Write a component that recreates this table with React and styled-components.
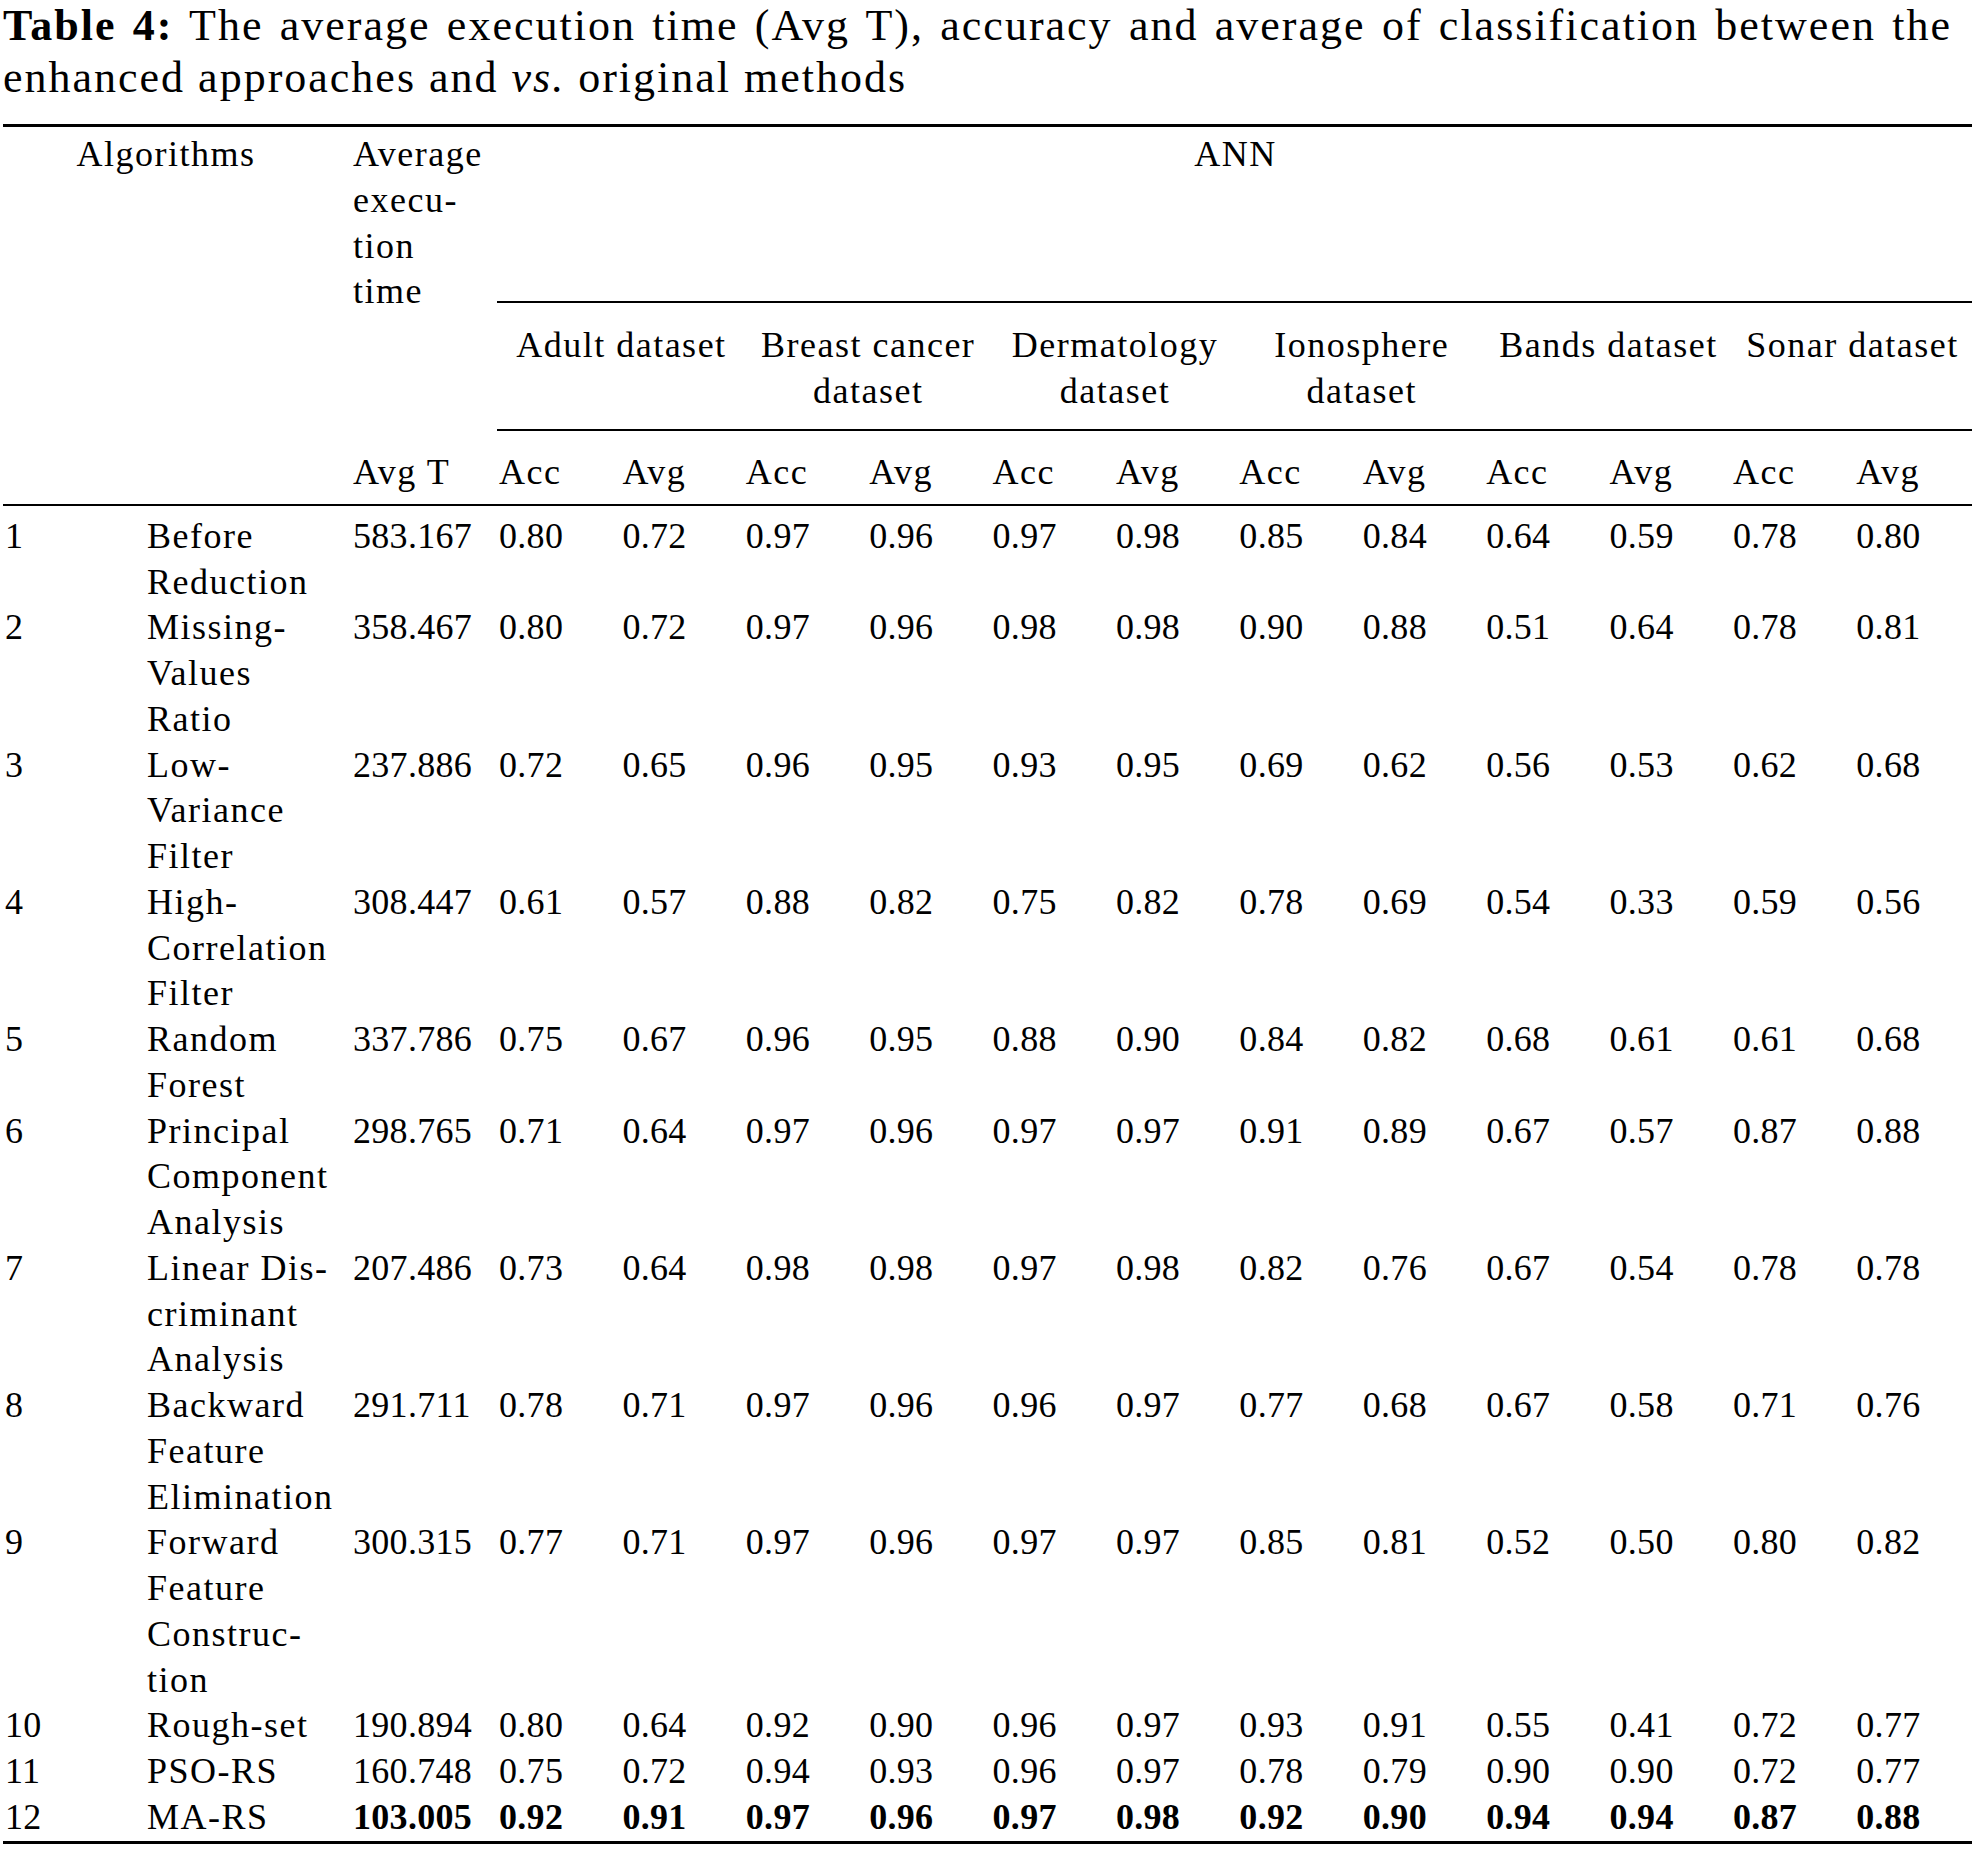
import React from "react";
import styled, { createGlobalStyle } from "styled-components";

const GlobalStyle = createGlobalStyle`
  html, body { margin: 0; padding: 0; background: #ffffff; }
  body {
    font-family: "Liberation Serif", "Times New Roman", Times, serif;
    color: #000000;
  }
`;

const COLS = "142px 206px 146px repeat(11, 123.4px) 1fr";

const Page = styled.div`
  width: 1969px;
  padding: 0 3px;
  font-family: "Liberation Serif", "Times New Roman", Times, serif;
  color: #000;
`;

const Caption = styled.p`
  margin: 0 0 20px 0;
  padding-right: 20px;
  font-size: 44px;
  line-height: 52px;
  letter-spacing: 2px;
  text-align: justify;
`;

const CaptionLabel = styled.b`
  font-weight: 700;
`;

const Em = styled.i`
  font-style: italic;
`;

const Head = styled.div`
  display: grid;
  grid-template-columns: ${COLS};
  border-top: 3px solid #000;
  border-bottom: 2px solid #000;
  font-size: 36px;
  line-height: 45.75px;
`;

const HeadCell = styled.div`
  box-sizing: border-box;
  grid-column: ${(p) => p.$col};
  grid-row: ${(p) => p.$row};
  padding: ${(p) => p.$pt || 5}px ${(p) => p.$pr || 0}px ${(p) => p.$pb || 0}px 2px;
  height: ${(p) => (p.$h ? `${p.$h}px` : "auto")};
  text-align: ${(p) => p.$align || "left"};
  letter-spacing: 1.5px;
  white-space: nowrap;
  border-bottom: ${(p) => (p.$rule ? "2px solid #000" : "none")};
`;

const Line = styled.span`
  display: block;
`;

const Body = styled.div`
  display: grid;
  grid-template-columns: ${COLS};
  padding-top: 8px;
  border-bottom: 3px solid #000;
  font-size: 36px;
  line-height: 45.75px;
`;

const Cell = styled.div`
  padding-left: 2px;
  white-space: nowrap;
  letter-spacing: ${(p) => (p.$word ? "1.5px" : "0.3px")};
  font-weight: ${(p) => (p.$bold ? 700 : 400)};
`;

const datasets = [
  ["Adult dataset"],
  ["Breast cancer", "dataset"],
  ["Dermatology", "dataset"],
  ["Ionosphere", "dataset"],
  ["Bands dataset"],
  ["Sonar dataset"],
];

const rows = [
  { id: "1", name: ["Before", "Reduction"], t: "583.167", v: ["0.80", "0.72", "0.97", "0.96", "0.97", "0.98", "0.85", "0.84", "0.64", "0.59", "0.78", "0.80"] },
  { id: "2", name: ["Missing-", "Values", "Ratio"], t: "358.467", v: ["0.80", "0.72", "0.97", "0.96", "0.98", "0.98", "0.90", "0.88", "0.51", "0.64", "0.78", "0.81"] },
  { id: "3", name: ["Low-", "Variance", "Filter"], t: "237.886", v: ["0.72", "0.65", "0.96", "0.95", "0.93", "0.95", "0.69", "0.62", "0.56", "0.53", "0.62", "0.68"] },
  { id: "4", name: ["High-", "Correlation", "Filter"], t: "308.447", v: ["0.61", "0.57", "0.88", "0.82", "0.75", "0.82", "0.78", "0.69", "0.54", "0.33", "0.59", "0.56"] },
  { id: "5", name: ["Random", "Forest"], t: "337.786", v: ["0.75", "0.67", "0.96", "0.95", "0.88", "0.90", "0.84", "0.82", "0.68", "0.61", "0.61", "0.68"] },
  { id: "6", name: ["Principal", "Component", "Analysis"], t: "298.765", v: ["0.71", "0.64", "0.97", "0.96", "0.97", "0.97", "0.91", "0.89", "0.67", "0.57", "0.87", "0.88"] },
  { id: "7", name: ["Linear Dis-", "criminant", "Analysis"], t: "207.486", v: ["0.73", "0.64", "0.98", "0.98", "0.97", "0.98", "0.82", "0.76", "0.67", "0.54", "0.78", "0.78"] },
  { id: "8", name: ["Backward", "Feature", "Elimination"], t: "291.711", v: ["0.78", "0.71", "0.97", "0.96", "0.96", "0.97", "0.77", "0.68", "0.67", "0.58", "0.71", "0.76"] },
  { id: "9", name: ["Forward", "Feature", "Construc-", "tion"], t: "300.315", v: ["0.77", "0.71", "0.97", "0.96", "0.97", "0.97", "0.85", "0.81", "0.52", "0.50", "0.80", "0.82"] },
  { id: "10", name: ["Rough-set"], t: "190.894", v: ["0.80", "0.64", "0.92", "0.90", "0.96", "0.97", "0.93", "0.91", "0.55", "0.41", "0.72", "0.77"] },
  { id: "11", name: ["PSO-RS"], t: "160.748", v: ["0.75", "0.72", "0.94", "0.93", "0.96", "0.97", "0.78", "0.79", "0.90", "0.90", "0.72", "0.77"] },
  { id: "12", name: ["MA-RS"], t: "103.005", v: ["0.92", "0.91", "0.97", "0.96", "0.97", "0.98", "0.92", "0.90", "0.94", "0.94", "0.87", "0.88"], bold: true },
];

function Lines({ items }) {
  return items.map((l, i) => <Line key={i}>{l}</Line>);
}

export default function App() {
  return (
    <Page>
      <GlobalStyle />
      <Caption>
        <CaptionLabel>Table 4:</CaptionLabel> The average execution time (Avg T), accuracy and average of
        classification between the enhanced approaches and <Em>vs.</Em> original methods
      </Caption>

      <Head>
        <HeadCell $col="1 / span 2" $row="1 / span 3" $align="center" $pr={24}>
          Algorithms
        </HeadCell>
        <HeadCell $col="3" $row="1 / span 2">
          <Lines items={["Average", "execu-", "tion", "time"]} />
        </HeadCell>
        <HeadCell $col="4 / span 12" $row="1" $align="center" $h={176} $rule>
          ANN
        </HeadCell>
        {datasets.map((d, i) => (
          <HeadCell
            key={i}
            $col={`${4 + i * 2} / span 2`}
            $row="2"
            $align="center"
            $h={128}
            $pt={20}
            $rule
          >
            <Lines items={d} />
          </HeadCell>
        ))}
        <HeadCell $col="3" $row="3" $pt={19} $pb={8}>
          Avg T
        </HeadCell>
        {datasets.flatMap((_, i) => [
          <HeadCell key={`a${i}`} $col={`${4 + i * 2}`} $row="3" $pt={19} $pb={8}>
            Acc
          </HeadCell>,
          <HeadCell key={`v${i}`} $col={`${5 + i * 2}`} $row="3" $pt={19} $pb={8}>
            Avg
          </HeadCell>,
        ])}
      </Head>

      <Body>
        {rows.map((r) => (
          <React.Fragment key={r.id}>
            <Cell>{r.id}</Cell>
            <Cell $word>
              <Lines items={r.name} />
            </Cell>
            <Cell $bold={r.bold}>{r.t}</Cell>
            {r.v.map((x, j) => (
              <Cell key={j} $bold={r.bold}>
                {x}
              </Cell>
            ))}
          </React.Fragment>
        ))}
      </Body>
    </Page>
  );
}
